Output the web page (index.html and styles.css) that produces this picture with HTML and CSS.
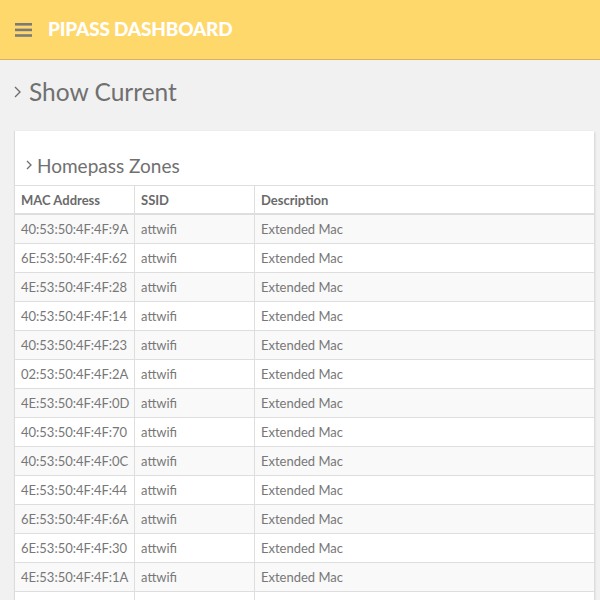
FILE: index.html
```html
<!DOCTYPE html>
<html>
<head>
<meta charset="utf-8">
<link rel="stylesheet" href="styles.css">
</head>
<body>
<header class="topbar">
  <svg class="burger" width="17" height="14" viewBox="0 0 17 14"><rect x="0" y="0" width="17" height="2.6" fill="#7a7a7a"/><rect x="0" y="5.6" width="17" height="2.6" fill="#7a7a7a"/><rect x="0" y="11.2" width="17" height="2.6" fill="#7a7a7a"/></svg>
  <span class="brand">PIPASS DASHBOARD</span>
</header>
<main class="content">
  <h1 class="page-title"><svg class="chev chev-lg" width="7" height="12" viewBox="0 0 7 12"><polyline points="1,1 6,6 1,11" fill="none" stroke="#6f6f6f" stroke-width="1.4"/></svg>Show Current</h1>
  <section class="card">
    <h2 class="card-title"><svg class="chev chev-sm" width="6" height="10" viewBox="0 0 6 10"><polyline points="1,1 5,5 1,9" fill="none" stroke="#6f6f6f" stroke-width="1.3"/></svg>Homepass Zones</h2>
    <table class="zones">
      <thead>
        <tr><th class="c1">MAC Address</th><th class="c2">SSID</th><th>Description</th></tr>
      </thead>
      <tbody>
        <tr><td>40:53:50:4F:4F:9A</td><td>attwifi</td><td>Extended Mac</td></tr>
        <tr><td>6E:53:50:4F:4F:62</td><td>attwifi</td><td>Extended Mac</td></tr>
        <tr><td>4E:53:50:4F:4F:28</td><td>attwifi</td><td>Extended Mac</td></tr>
        <tr><td>40:53:50:4F:4F:14</td><td>attwifi</td><td>Extended Mac</td></tr>
        <tr><td>40:53:50:4F:4F:23</td><td>attwifi</td><td>Extended Mac</td></tr>
        <tr><td>02:53:50:4F:4F:2A</td><td>attwifi</td><td>Extended Mac</td></tr>
        <tr><td>4E:53:50:4F:4F:0D</td><td>attwifi</td><td>Extended Mac</td></tr>
        <tr><td>40:53:50:4F:4F:70</td><td>attwifi</td><td>Extended Mac</td></tr>
        <tr><td>40:53:50:4F:4F:0C</td><td>attwifi</td><td>Extended Mac</td></tr>
        <tr><td>4E:53:50:4F:4F:44</td><td>attwifi</td><td>Extended Mac</td></tr>
        <tr><td>6E:53:50:4F:4F:6A</td><td>attwifi</td><td>Extended Mac</td></tr>
        <tr><td>6E:53:50:4F:4F:30</td><td>attwifi</td><td>Extended Mac</td></tr>
        <tr><td>4E:53:50:4F:4F:1A</td><td>attwifi</td><td>Extended Mac</td></tr>
        <tr><td></td><td></td><td></td></tr>
      </tbody>
    </table>
  </section>
</main>
</body>
</html>
```

FILE: styles.css
```css
html, body {
  margin: 0;
  padding: 0;
}
body {
  background: #f1f1f1;
  font-family: Lato, "Liberation Sans", sans-serif;
  color: #707070;
  overflow: hidden;
  height: 600px;
}
.topbar {
  height: 59px;
  background: #ffd86c;
  border-bottom: 1px solid #d6b35c;
  display: flex;
  align-items: center;
  padding-left: 15px;
}
.burger {
  display: block;
  margin-right: 16px;
  margin-top: 1px;
}
.brand {
  color: #ffffff;
  font-weight: 900;
  font-size: 19px;
  letter-spacing: -0.2px;
  margin-top: -2px;
}
.content {
  padding: 0 6px 0 15px;
}
.page-title {
  margin: 0;
  padding: 0 0 9px 0;
  height: 71px;
  font-size: 24.5px;
  font-weight: 400;
  color: #707070;
  display: flex;
  align-items: center;
  box-sizing: border-box;
}
.chev-lg {
  margin-left: -1px;
  margin-right: 8px;
  margin-top: 2px;
}
.card {
  background: #fff;
  box-shadow: -1px 0 1px rgba(0,0,0,0.08), 1px 1px 2px rgba(0,0,0,0.12);
  padding-top: 14px;
}
.card-title {
  margin: 0;
  height: 40px;
  font-size: 19px;
  font-weight: 400;
  color: #707070;
  display: flex;
  align-items: center;
  padding-left: 11px;
}
.chev-sm {
  margin-right: 5px;
}
.zones {
  width: 100%;
  border-collapse: collapse;
  table-layout: fixed;
  font-size: 13px;
}
.zones th, .zones td {
  border: 1px solid #dedede;
  text-align: left;
  padding: 0 6px;
  height: 28px;
  white-space: nowrap;
}
.zones tr > :first-child { border-left: none; }
.zones tr > :last-child { border-right: none; }
.zones th {
  font-weight: 700;
  color: #6a6a6a;
  height: 27px;
  border-bottom: 2px solid #dedede;
}
.zones td {
  color: #777;
}
.zones .c1 { width: 107px; }
.zones .c2 { width: 107px; }
.zones tbody tr:nth-child(odd) {
  background: #f9f9f9;
}
```
